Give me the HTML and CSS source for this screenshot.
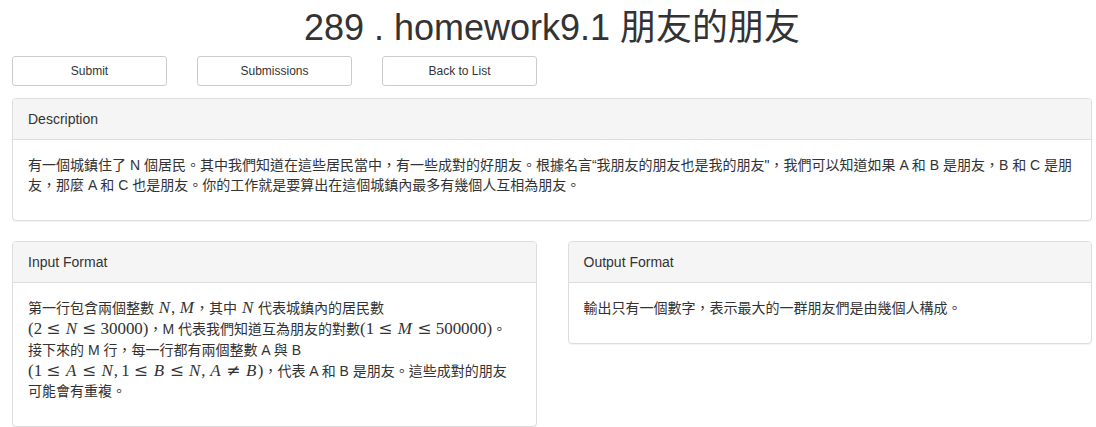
FILE: index.html
```html
<!DOCTYPE html>
<html lang="zh-Hant">
<head>
<meta charset="utf-8">
<title>289 . homework9.1 朋友的朋友</title>
<link rel="stylesheet" href="styles.css">
</head>
<body>
<div class="page">
  <h1 class="title">289 . homework9.1 朋友的朋友</h1>
  <div class="actions">
    <a class="btn">Submit</a>
    <a class="btn">Submissions</a>
    <a class="btn">Back to List</a>
  </div>
  <section class="panel">
    <div class="panel-heading">Description</div>
    <div class="panel-body">
      <p>有一個城鎮住了 N 個居民。其中我們知道在這些居民當中，有一些成對的好朋友。根據名言“我朋友的朋友也是我的朋友"，我們可以知道如果 A 和 B 是朋友，B 和 C 是朋友，那麼 A 和 C 也是朋友。你的工作就是要算出在這個城鎮內最多有幾個人互相為朋友。</p>
    </div>
  </section>
  <div class="cols">
    <section class="panel">
      <div class="panel-heading">Input Format</div>
      <div class="panel-body">
        <p>第一行包含兩個整數 <span class="math"><i>N</i><span class="pu">,</span><i class="wide">M</i></span>，其中 <span class="math"><i>N</i></span> 代表城鎮內的居民數<br><span class="math">(2<span class="rel">≤</span><i>N</i><span class="rel">≤</span>30000)</span>，M 代表我們知道互為朋友的對數<span class="math">(1<span class="rel">≤</span><i class="wide">M</i><span class="rel">≤</span>500000)</span>。<br>接下來的 M 行，每一行都有兩個整數 A 與 B<br><span class="math">(1<span class="rel">≤</span><i>A</i><span class="rel">≤</span><i>N</i><span class="pu">,</span>1<span class="rel">≤</span><i>B</i><span class="rel">≤</span><i>N</i><span class="pu">,</span><i>A</i><span class="rel">≠</span><i>B</i>)</span>，代表 A 和 B 是朋友。這些成對的朋友<br>可能會有重複。</p>
      </div>
    </section>
    <section class="panel">
      <div class="panel-heading">Output Format</div>
      <div class="panel-body">
        <p>輸出只有一個數字，表示最大的一群朋友們是由幾個人構成。</p>
      </div>
    </section>
  </div>
</div>
</body>
</html>
```

FILE: styles.css
```css
html, body {
  margin: 0;
  padding: 0;
  background: #fff;
}
body {
  font-family: "Liberation Sans", Arial, "Noto Sans CJK SC", sans-serif;
  font-size: 14px;
  line-height: 20px;
  color: #333;
}
.page {
  padding: 8px 4px 0 12px;
}
.title {
  margin: 0 0 8px;
  font-size: 36px;
  font-weight: 400;
  line-height: 40px;
  text-align: center;
  color: #333;
}
.actions {
  display: flex;
  gap: 30px;
  margin-bottom: 12px;
}
.btn {
  box-sizing: border-box;
  width: 155px;
  height: 30px;
  border: 1px solid #ccc;
  border-radius: 3px;
  background: #fff;
  font-size: 12px;
  line-height: 28px;
  text-align: center;
  color: #333;
}
.panel {
  border: 1px solid #ddd;
  border-radius: 4px;
  box-shadow: 0 1px 1px rgba(0, 0, 0, 0.05);
  margin-bottom: 20px;
  background: #fff;
}
.panel-heading {
  background: #f5f5f5;
  border-bottom: 1px solid #ddd;
  border-radius: 3px 3px 0 0;
  padding: 10px 15px;
  font-size: 14px;
  line-height: 20px;
}
.panel-body {
  padding: 15px;
}
.panel-body p {
  margin: 0 0 10px;
}
.cols {
  display: grid;
  grid-template-columns: 1fr 1fr;
  column-gap: 31px;
  align-items: start;
}
.math {
  font-family: "Liberation Serif", "DejaVu Serif", serif;
  font-size: 16.94px;
  line-height: 1.2;
  white-space: nowrap;
}
.math i {
  display: inline-block;
  width: 0.78em;
  font-style: italic;
  text-align: center;
}
.math i.wide {
  width: 0.97em;
}
.rel {
  display: inline-block;
  width: 1.333em;
  font-family: "DejaVu Serif", serif;
  text-align: center;
}
.pu {
  display: inline-block;
  width: 0.445em;
}
```
